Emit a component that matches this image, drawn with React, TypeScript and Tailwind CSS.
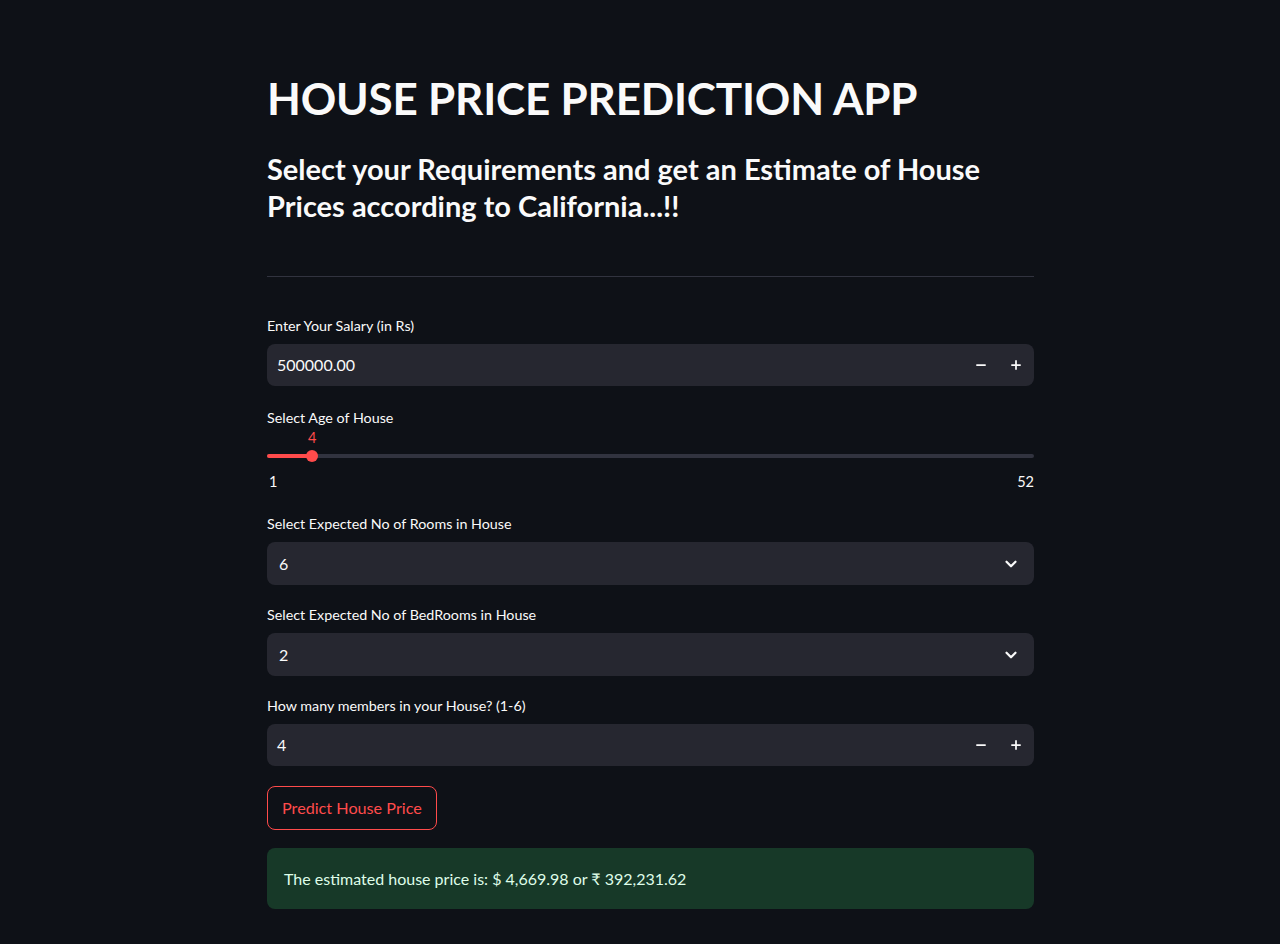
import { Minus, Plus, ChevronDown } from "lucide-react";

const font = { fontFamily: "Lato, 'Noto Sans', sans-serif" };

function Label({ children }: { children: React.ReactNode }) {
    return <p className="text-[14.3px] leading-[20px] text-[#fafafa] mb-[8px]">{children}</p>;
}

function NumberInput({ value }: { value: string }) {
    return (
        <div className="flex h-[42px] items-center rounded-lg bg-[#262730]">
            <span className="flex-1 pl-[10px] text-[16px] text-[#fafafa]">{value}</span>
            <button type="button" className="flex h-full w-[35px] items-center justify-center text-[#fafafa]">
                <Minus size={14} strokeWidth={3} />
            </button>
            <button type="button" className="flex h-full w-[36px] items-center justify-center text-[#fafafa]">
                <Plus size={14} strokeWidth={3} />
            </button>
        </div>
    );
}

function Select({ value }: { value: string }) {
    return (
        <div className="flex h-[43px] items-center justify-between rounded-lg bg-[#262730] pl-[12px] pr-[14px]">
            <span className="text-[16px] text-[#fafafa]">{value}</span>
            <ChevronDown size={18} strokeWidth={3} className="text-[#fafafa]" />
        </div>
    );
}

export default function App() {
    return (
        <div className="min-h-screen bg-[#0e1117] text-[#fafafa]" style={font}>
            <div className="w-[767px] ml-[267px] pt-[70px] pb-[36px]">
                <h1 className="text-[44px] font-bold leading-[56px] tracking-[-0.2px]">HOUSE PRICE PREDICTION APP</h1>
                <h3 className="mt-[24px] text-[29px] font-bold leading-[37px]">
                    Select your Requirements and get an Estimate of House Prices according to California...!!
                </h3>
                <hr className="mt-[52px] border-t border-[#31333f]" />

                <div className="mt-[39px]">
                    <Label>Enter Your Salary (in Rs)</Label>
                    <NumberInput value="500000.00" />
                </div>

                <div className="mt-[22px]">
                    <Label>Select Age of House</Label>
                    <div className="relative h-[36px]">
                        <div className="absolute left-0 right-0 top-[18px] h-[4px] rounded-full bg-[#31333f]" />
                        <div className="absolute left-0 top-[18px] h-[4px] w-[45px] rounded-full bg-[#ff4b4b]" />
                        <div className="absolute left-[39px] top-[14px] h-[12px] w-[12px] rounded-full bg-[#ff4b4b]" />
                        <span className="absolute left-[41px] top-[-9px] text-[14.5px] text-[#ff4b4b]">4</span>
                    </div>
                    <div className="flex justify-between text-[14.5px] leading-[20px] pl-[2px]">
                        <span>1</span>
                        <span>52</span>
                    </div>
                </div>

                <div className="mt-[22px]">
                    <Label>Select Expected No of Rooms in House</Label>
                    <Select value="6" />
                </div>

                <div className="mt-[20px]">
                    <Label>Select Expected No of BedRooms in House</Label>
                    <Select value="2" />
                </div>

                <div className="mt-[20px]">
                    <Label>How many members in your House? (1-6)</Label>
                    <NumberInput value="4" />
                </div>

                <button
                    type="button"
                    className="mt-[20px] h-[44px] rounded-lg border border-[#ff4b4b] px-[14px] text-[16.2px] text-[#ff4b4b]"
                >
                    Predict House Price
                </button>

                <div className="mt-[18px] flex h-[61px] items-center rounded-lg bg-[#173928] px-[17px] text-[16px] text-[#dffde9]">
                    The estimated house price is: $ 4,669.98 or ₹ 392,231.62
                </div>
            </div>
        </div>
    );
}
